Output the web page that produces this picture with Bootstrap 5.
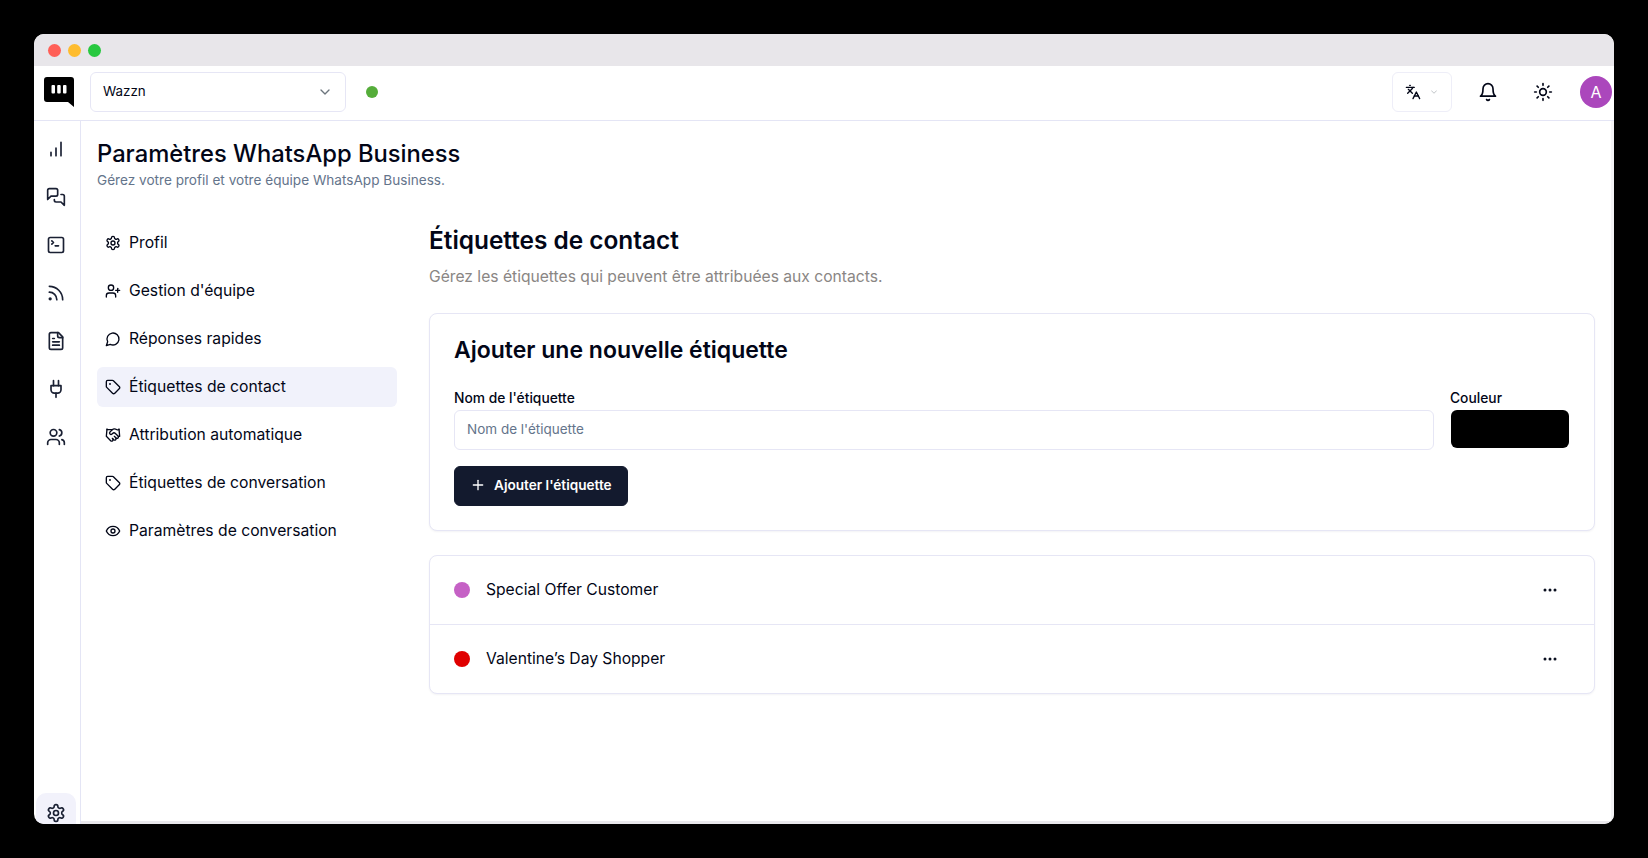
<!DOCTYPE html>
<html lang="fr">
<head>
  <meta charset="UTF-8">
  <meta name="viewport" content="width=device-width, initial-scale=1.0">
  <title>Paramètres WhatsApp Business</title>
  <link href="https://cdn.jsdelivr.net/npm/bootstrap@5.3.0/dist/css/bootstrap.min.css" rel="stylesheet">
  <style>
    html, body { height: 100%; }
    body {
      font-family: Inter, "Liberation Sans", sans-serif;
      background: #000;
      color: #020617;
      padding: 34px 34px 34px;
      overflow: hidden;
    }
    .ico { fill: none; stroke: currentColor; stroke-width: 2; stroke-linecap: round; stroke-linejoin: round; flex: none; }
    .app-window { height: 790px; background: #fff; border-radius: 10px; overflow: hidden; }
    .title-bar { height: 32px; background: #e8e6ea; padding: 1px 0 0 14px; gap: 7px; }
    .light { width: 13px; height: 13px; border-radius: 50%; }
    .top-bar { height: 55px; border-bottom: 1px solid #e4e5f5; padding: 0 2px 2px 10px; }
    .logo-box { width: 30px; height: 30px; margin-right: 16px; }
    .wa-select { width: 256px; height: 40px; border: 1px solid #e6e6f5; border-radius: 6px; padding: 0 12px 1px 12px; font-size: 13.4px; }
    .status-dot { width: 12px; height: 12px; background: #55ad3a; border-radius: 50%; margin-left: 20px; }
    .lang-btn { width: 60px; height: 40px; border: 1px solid #eeeef8; border-radius: 6px; gap: 8px; }
    .bar-icon { width: 24px; display: flex; justify-content: center; }
    .bell-slot { margin-left: 24px; }
    .sun-slot { margin-left: 31px; }
    .avatar-dot { width: 32px; height: 32px; margin-left: 25px; border-radius: 50%; background: #ab47bc; color: #fff; font-size: 16px; }
    .side-rail { width: 47px; border-right: 1px solid #e4e5f5; padding-top: 4px; }
    .rail-item { width: 44px; height: 48px; color: #1a2033; }
    .rail-gear { width: 40px; height: 31px; margin: 0 0 0 2px; padding-top: 10px; background: #f2f2fb; border-radius: 10px 10px 0 0; color: #1a2033; }
    .main-pane { border-bottom: 3px solid #e9e8ec; border-right: 3px solid #f4f3f6; padding: 0 16px 0 16px; min-width: 0; }
    .page-title { font-size: 23.75px; font-weight: 500; line-height: 32px; margin: 17px 0 0; }
    .page-sub { font-size: 13.6px; line-height: 20px; color: #64748b; margin: 0; }
    .side-nav { width: 300px; margin-top: 33px; }
    .side-link { height: 40px; padding-left: 8px; gap: 8px; margin-bottom: 8px; font-size: 15.7px; border-radius: 6px; color: #020617; text-decoration: none; }
    .side-link.active-link { background: #f1f2fb; }
    .detail-pane { margin-left: 32px; margin-top: 34px; }
    .detail-title { font-size: 24.4px; font-weight: 600; line-height: 32px; margin: 0 0 10px; }
    .detail-sub { font-size: 15.65px; line-height: 22px; color: #8a8684; margin: 0 0 25px; }
    .panel-box { border: 1px solid #e6e6f5; border-radius: 8px; background: #fff; box-shadow: 0 1px 2px rgba(20, 20, 60, .05); }
    .panel-pad { padding: 20px 24px 24px; }
    .panel-title { font-size: 23px; font-weight: 600; line-height: 32px; margin: 0 0 22px; }
    .field-label { font-size: 13.8px; font-weight: 500; line-height: 20px; margin: 0 0 2px; display: block; }
    .name-input.form-control { height: 40px; border-color: #e6e6f5; border-radius: 6px; font-size: 13.5px; padding: 0 12px 2px; }
    .name-input.form-control::placeholder { color: #64748b; }
    .color-field { width: 120px; margin-left: 16px; }
    .color-swatch { width: 118px; height: 38px; margin: 1px 0 0 1px; background: #000; border-radius: 6px; }
    .add-btn.btn { height: 40px; margin-top: 16px; padding: 0 15px 2px 15px; gap: 8px; background: #131a2e; border-color: #131a2e; color: #fff; font-size: 13.6px; font-weight: 600; border-radius: 6px; }
    .tag-list { margin-top: 24px; }
    .tag-row { height: 68px; padding: 0 37px 0 24px; font-size: 15.65px; }
    .tag-row + .tag-row { border-top: 1px solid #e6e6f5; height: 69px; }
    .tag-dot { width: 16px; height: 16px; border-radius: 50%; margin-right: 16px; }
  </style>
</head>
<body>
  <svg width="0" height="0" class="position-absolute">
    <symbol id="i-bars" viewBox="0 0 24 24"><path d="M6 20v-4M12 20v-9M18 20V4"/></symbol>
    <symbol id="i-chats" viewBox="0 0 24 24"><path d="M14 9a2 2 0 0 1-2 2H6l-4 4V4c0-1.1.9-2 2-2h8a2 2 0 0 1 2 2z"/><path d="M18 9h2a2 2 0 0 1 2 2v11l-4-4h-6a2 2 0 0 1-2-2v-1"/></symbol>
    <symbol id="i-term" viewBox="0 0 24 24"><path d="m7 11 2-2-2-2"/><path d="M11 13h4"/><rect x="3" y="3" width="18" height="18" rx="2"/></symbol>
    <symbol id="i-rss" viewBox="0 0 24 24"><path d="M4 11a9 9 0 0 1 9 9"/><path d="M4 4a16 16 0 0 1 16 16"/><circle cx="5" cy="19" r="1"/></symbol>
    <symbol id="i-file" viewBox="0 0 24 24"><path d="M15 2H6a2 2 0 0 0-2 2v16a2 2 0 0 0 2 2h12a2 2 0 0 0 2-2V7Z"/><path d="M14 2v4a2 2 0 0 0 2 2h4"/><path d="M10 9H8"/><path d="M16 13H8"/><path d="M16 17H8"/></symbol>
    <symbol id="i-plug" viewBox="0 0 24 24"><path d="M12 22v-5"/><path d="M9 8V2"/><path d="M15 8V2"/><path d="M18 8v5a4 4 0 0 1-4 4h-4a4 4 0 0 1-4-4V8Z"/></symbol>
    <symbol id="i-users" viewBox="0 0 24 24"><path d="M16 21v-2a4 4 0 0 0-4-4H6a4 4 0 0 0-4 4v2"/><circle cx="9" cy="7" r="4"/><path d="M22 21v-2a4 4 0 0 0-3-3.87"/><path d="M16 3.13a4 4 0 0 1 0 7.75"/></symbol>
    <symbol id="i-gear" viewBox="0 0 24 24"><path d="M12.22 2h-.44a2 2 0 0 0-2 2v.18a2 2 0 0 1-1 1.73l-.43.25a2 2 0 0 1-2 0l-.15-.08a2 2 0 0 0-2.73.73l-.22.38a2 2 0 0 0 .73 2.73l.15.1a2 2 0 0 1 1 1.72v.51a2 2 0 0 1-1 1.74l-.15.09a2 2 0 0 0-.73 2.73l.22.38a2 2 0 0 0 2.73.73l.15-.08a2 2 0 0 1 2 0l.43.25a2 2 0 0 1 1 1.73V20a2 2 0 0 0 2 2h.44a2 2 0 0 0 2-2v-.18a2 2 0 0 1 1-1.73l.43-.25a2 2 0 0 1 2 0l.15.08a2 2 0 0 0 2.73-.73l.22-.39a2 2 0 0 0-.73-2.73l-.15-.08a2 2 0 0 1-1-1.74v-.5a2 2 0 0 1 1-1.74l.15-.09a2 2 0 0 0 .73-2.73l-.22-.38a2 2 0 0 0-2.73-.73l-.15.08a2 2 0 0 1-2 0l-.43-.25a2 2 0 0 1-1-1.73V4a2 2 0 0 0-2-2z"/><circle cx="12" cy="12" r="3"/></symbol>
    <symbol id="i-userplus" viewBox="0 0 24 24"><path d="M16 21v-2a4 4 0 0 0-4-4H6a4 4 0 0 0-4 4v2"/><circle cx="9" cy="7" r="4"/><path d="M19 8v6"/><path d="M22 11h-6"/></symbol>
    <symbol id="i-msg" viewBox="0 0 24 24"><path d="M7.9 20A9 9 0 1 0 4 16.1L2 22Z"/></symbol>
    <symbol id="i-tag" viewBox="0 0 24 24"><path d="M12.586 2.586A2 2 0 0 0 11.172 2H4a2 2 0 0 0-2 2v7.172a2 2 0 0 0 .586 1.414l8.704 8.704a2.426 2.426 0 0 0 3.42 0l6.58-6.58a2.426 2.426 0 0 0 0-3.42z"/><circle cx="7.5" cy="7.5" r=".5"/></symbol>
    <symbol id="i-hands" viewBox="0 0 24 24"><path d="m11 17 2 2a1 1 0 1 0 3-3"/><path d="m14 14 2.5 2.5a1 1 0 1 0 3-3l-3.88-3.88a3 3 0 0 0-4.24 0l-.88.88a1 1 0 1 1-3-3l2.81-2.81a5.79 5.79 0 0 1 7.06-.87l.47.28a2 2 0 0 0 1.42.25L21 4"/><path d="m21 3 1 11h-2"/><path d="M3 3 2 14l6.5 6.5a1 1 0 1 0 3-3"/><path d="M3 4h8"/></symbol>
    <symbol id="i-eye" viewBox="0 0 24 24"><path d="M2 12s3-7 10-7 10 7 10 7-3 7-10 7-10-7-10-7Z"/><circle cx="12" cy="12" r="3"/></symbol>
    <symbol id="i-lang" viewBox="0 0 24 24"><path d="m5 8 6 6"/><path d="m4 14 6-6 2-3"/><path d="M2 5h12"/><path d="M7 2h1"/><path d="m22 22-5-10-5 10"/><path d="M14 18h6"/></symbol>
    <symbol id="i-bell" viewBox="0 0 24 24"><path d="M6 8a6 6 0 0 1 12 0c0 7 3 9 3 9H3s3-2 3-9"/><path d="M10.3 21a1.94 1.94 0 0 0 3.4 0"/></symbol>
    <symbol id="i-sun" viewBox="0 0 24 24"><circle cx="12" cy="12" r="4"/><path d="M12 2v2"/><path d="M12 20v2"/><path d="m4.93 4.93 1.41 1.41"/><path d="m17.66 17.66 1.41 1.41"/><path d="M2 12h2"/><path d="M20 12h2"/><path d="m6.34 17.66-1.41 1.41"/><path d="m19.07 4.93-1.41 1.41"/></symbol>
    <symbol id="i-chev" viewBox="0 0 24 24"><path d="m6 9 6 6 6-6"/></symbol>
    <symbol id="i-plus" viewBox="0 0 24 24"><path d="M5 12h14"/><path d="M12 5v14"/></symbol>
  </svg>

  <div class="app-window d-flex flex-column">
    <div class="title-bar d-flex align-items-center flex-shrink-0">
      <span class="light" style="background:#ff5f57"></span>
      <span class="light" style="background:#febc2e"></span>
      <span class="light" style="background:#28c840"></span>
    </div>

    <header class="top-bar d-flex align-items-center flex-shrink-0">
      <svg class="logo-box" viewBox="0 0 30 30">
        <path fill="#000" d="M3 0h24a3 3 0 0 1 3 3v27l-6-5H3a3 3 0 0 1-3-3V3a3 3 0 0 1 3-3z"/>
        <rect x="7.5" y="8" width="3.5" height="8.5" rx="1" fill="#fff"/>
        <rect x="13.2" y="8" width="3.5" height="8.5" rx="1" fill="#fff"/>
        <rect x="19" y="8" width="3.5" height="8.5" rx="1" fill="#fff"/>
      </svg>
      <div class="wa-select d-flex align-items-center justify-content-between">
        <span>Wazzn</span>
        <svg class="ico text-secondary" width="16" height="16"><use href="#i-chev"/></svg>
      </div>
      <span class="status-dot"></span>
      <div class="ms-auto d-flex align-items-center">
        <div class="lang-btn d-flex align-items-center justify-content-center">
          <svg class="ico" width="16" height="16"><use href="#i-lang"/></svg>
          <svg class="ico text-secondary opacity-50" width="10" height="10"><use href="#i-chev"/></svg>
        </div>
        <span class="bar-icon bell-slot"><svg class="ico" width="20" height="20"><use href="#i-bell"/></svg></span>
        <span class="bar-icon sun-slot"><svg class="ico" width="20" height="20"><use href="#i-sun"/></svg></span>
        <span class="avatar-dot d-flex align-items-center justify-content-center">A</span>
      </div>
    </header>

    <div class="d-flex flex-grow-1" style="min-height:0">
      <nav class="side-rail d-flex flex-column flex-shrink-0">
        <a class="rail-item d-flex align-items-center justify-content-center"><svg class="ico" width="20" height="20"><use href="#i-bars"/></svg></a>
        <a class="rail-item d-flex align-items-center justify-content-center"><svg class="ico" width="20" height="20"><use href="#i-chats"/></svg></a>
        <a class="rail-item d-flex align-items-center justify-content-center"><svg class="ico" width="20" height="20"><use href="#i-term"/></svg></a>
        <a class="rail-item d-flex align-items-center justify-content-center"><svg class="ico" width="20" height="20"><use href="#i-rss"/></svg></a>
        <a class="rail-item d-flex align-items-center justify-content-center"><svg class="ico" width="20" height="20"><use href="#i-file"/></svg></a>
        <a class="rail-item d-flex align-items-center justify-content-center"><svg class="ico" width="20" height="20"><use href="#i-plug"/></svg></a>
        <a class="rail-item d-flex align-items-center justify-content-center"><svg class="ico" width="20" height="20"><use href="#i-users"/></svg></a>
        <a class="rail-gear mt-auto d-flex justify-content-center"><svg class="ico" width="20" height="20"><use href="#i-gear"/></svg></a>
      </nav>

      <main class="main-pane flex-grow-1">
        <h1 class="page-title">Paramètres WhatsApp Business</h1>
        <p class="page-sub">Gérez votre profil et votre équipe WhatsApp Business.</p>

        <div class="d-flex">
          <aside class="side-nav flex-shrink-0">
            <a class="side-link d-flex align-items-center" href="#"><svg class="ico" width="16" height="16"><use href="#i-gear"/></svg>Profil</a>
            <a class="side-link d-flex align-items-center" href="#"><svg class="ico" width="16" height="16"><use href="#i-userplus"/></svg>Gestion d'équipe</a>
            <a class="side-link d-flex align-items-center" href="#"><svg class="ico" width="16" height="16"><use href="#i-msg"/></svg>Réponses rapides</a>
            <a class="side-link active-link d-flex align-items-center" href="#"><svg class="ico" width="16" height="16"><use href="#i-tag"/></svg>Étiquettes de contact</a>
            <a class="side-link d-flex align-items-center" href="#"><svg class="ico" width="16" height="16"><use href="#i-hands"/></svg>Attribution automatique</a>
            <a class="side-link d-flex align-items-center" href="#"><svg class="ico" width="16" height="16"><use href="#i-tag"/></svg>Étiquettes de conversation</a>
            <a class="side-link d-flex align-items-center" href="#"><svg class="ico" width="16" height="16"><use href="#i-eye"/></svg>Paramètres de conversation</a>
          </aside>

          <section class="detail-pane flex-grow-1">
            <h2 class="detail-title">Étiquettes de contact</h2>
            <p class="detail-sub">Gérez les étiquettes qui peuvent être attribuées aux contacts.</p>

            <div class="panel-box panel-pad">
              <h3 class="panel-title">Ajouter une nouvelle étiquette</h3>
              <div class="d-flex align-items-start">
                <div class="flex-grow-1">
                  <label class="field-label" for="tag-name">Nom de l'étiquette</label>
                  <input id="tag-name" class="form-control name-input" type="text" placeholder="Nom de l'étiquette">
                </div>
                <div class="color-field flex-shrink-0">
                  <span class="field-label">Couleur</span>
                  <div class="color-swatch"></div>
                </div>
              </div>
              <button class="btn add-btn d-inline-flex align-items-center" type="button">
                <svg class="ico" width="16" height="16"><use href="#i-plus"/></svg>Ajouter l'étiquette
              </button>
            </div>

            <div class="panel-box tag-list">
              <div class="tag-row d-flex align-items-center">
                <span class="tag-dot" style="background:#c561c5"></span>
                <span>Special Offer Customer</span>
                <svg class="ms-auto" width="14" height="4" viewBox="0 0 14 4" fill="#0b1020"><circle cx="2" cy="2" r="1.5"/><circle cx="7" cy="2" r="1.5"/><circle cx="12" cy="2" r="1.5"/></svg>
              </div>
              <div class="tag-row d-flex align-items-center">
                <span class="tag-dot" style="background:#e00000"></span>
                <span>Valentine’s Day Shopper</span>
                <svg class="ms-auto" width="14" height="4" viewBox="0 0 14 4" fill="#0b1020"><circle cx="2" cy="2" r="1.5"/><circle cx="7" cy="2" r="1.5"/><circle cx="12" cy="2" r="1.5"/></svg>
              </div>
            </div>
          </section>
        </div>
      </main>
    </div>
  </div>
  <script src="https://cdn.jsdelivr.net/npm/bootstrap@5.3.0/dist/js/bootstrap.bundle.min.js"></script>
</body>
</html>
